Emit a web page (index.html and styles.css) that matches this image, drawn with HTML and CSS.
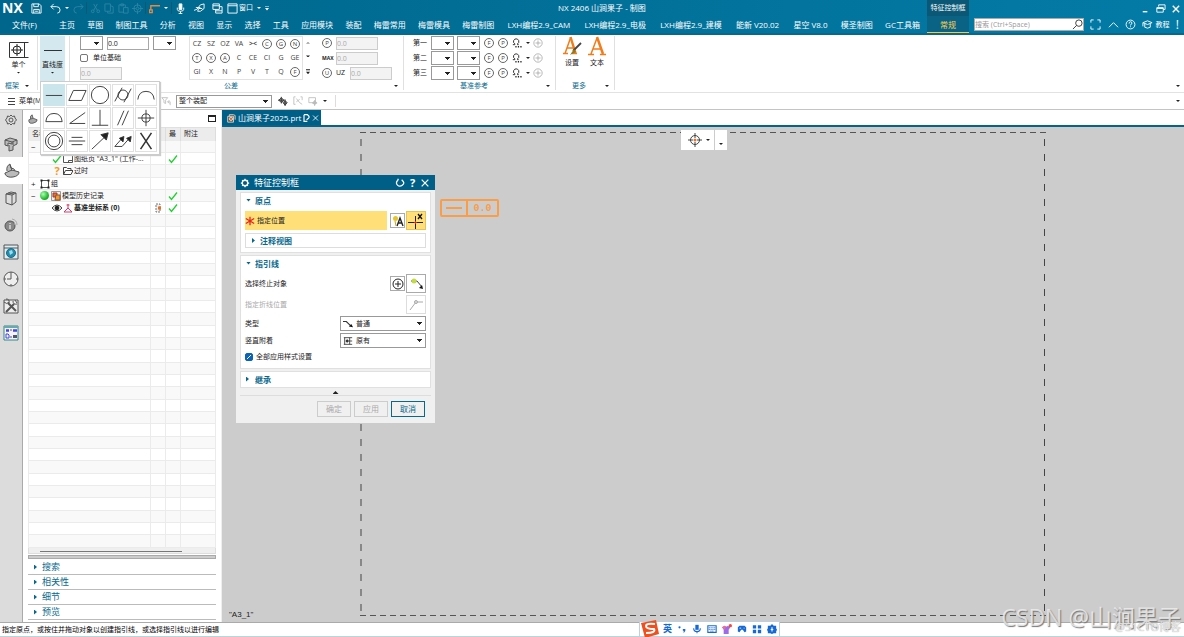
FILE: index.html
```html
<!DOCTYPE html>
<html lang="zh-CN">
<head>
<meta charset="utf-8">
<title>NX 2406 山涧果子 - 制图</title>
<link rel="stylesheet" href="styles.css">
</head>
<body>
<svg class="defs" aria-hidden="true">
  <symbol id="check" viewBox="0 0 10 10"><path d="M1 5.5 3.5 8.5 9 1.5" fill="none" stroke="#1fd12f" stroke-width="1.3"/></symbol>
  <symbol id="omega" viewBox="0 0 12 12"><path d="M1 8h2.400V7Q1 5.500 2 3 3 1 5 1t3 2Q9 5.500 6.600 7V8H8" fill="none" stroke="#333" stroke-width="1.200"/><path d="M4 10.500h1.500M7 10.500h1.500M10 10.500h1.500" stroke="#222" stroke-width="1.600"/></symbol>
  <symbol id="plus" viewBox="0 0 12 12"><circle cx="6" cy="6" r="5" fill="none" stroke="currentColor"/><path d="M6 3v6M3 6h6" stroke="currentColor"/></symbol>
  <symbol id="tree-page" viewBox="0 0 10 10"><path d="M.5 1.500h9v7h-9zM5.500 6.500h4M5.500 8.500v-2" fill="#fff" stroke="#555"/></symbol>
</svg>

<header class="top">
  <div class="titlebar">
    <div class="quick">
      <b class="logo">NX</b>
      <button aria-label="保存"><svg viewBox="0 0 12 12"><path d="M1 1h8l2 2v8H1zM3 1v3h5V1M3 11V7h6v4M4.500 9h3"/></svg></button>
      <button class="undo" aria-label="撤销"><svg viewBox="0 0 12 12"><path d="M4 1 1 4l3 3M1 4h6q4 0 4 3.500T8 11"/></svg></button>
      <i class="caret"></i>
      <button class="off" aria-label="重做"><svg viewBox="0 0 12 12"><path d="m8 1 3 3-3 3m3-3H5Q1 4 1 7.500T4 11"/></svg></button>
      <i class="bar"></i>
      <button class="off" aria-label="剪切"><svg viewBox="0 0 12 12"><path d="m4 1 4 7M8 1 4 8"/><circle cx="3" cy="9" r="1.500"/><circle cx="9" cy="9" r="1.500"/></svg></button>
      <button class="off" aria-label="复制"><svg viewBox="0 0 12 12"><path d="M1 1h6v8H1zM4 9v2h6V4L7 3"/></svg></button>
      <button class="off" aria-label="粘贴"><svg viewBox="0 0 12 12"><path d="M6 10H1V2h7v3M3 1h3v2H3zM6 5h5v6H6z"/></svg></button>
      <button class="off" aria-label="定位"><svg viewBox="0 0 12 12"><circle cx="6" cy="6" r="4"/><circle cx="6" cy="6" r="1.500"/><path d="M6 0v4M6 8v4M0 6h4M8 6h4"/></svg></button>
      <i class="bar"></i>
      <button class="hot" aria-label="引线"><svg viewBox="0 0 12 12"><path d="M2 8V3h10M.5 7.500h3v3h-3z" stroke-width="1.500"/></svg></button>
      <i class="caret"></i>
      <i class="bar"></i>
      <button aria-label="语音"><svg viewBox="0 0 12 12"><path d="M4.500 1h3v6h-3z" fill="#fff"/><path d="M2.500 5v2q0 2 3.500 2t3.500-2V5M6 9v2.500M4 11.500h4"/></svg></button>
      <button class="touch" aria-label="触控"><svg viewBox="0 0 12 12"><path d="m0 8 3-1 4-5 4-1v5L7 9H4l1-3h4"/><path d="M2 5h5"/></svg></button>
      <button class="wide" aria-label="切换窗口"><svg viewBox="0 0 12 12"><path d="M1 1h7v6H1zM1 3h7M4 7v4h7V4H8M4 8.500h7"/></svg></button>
      <button class="window"><svg viewBox="0 0 12 12"><path d="M1 1h10v10H1zM1 3h10"/></svg>窗口</button>
      <i class="caret"></i>
      <i class="caret more"></i>
    </div>
    <div class="title">NX 2406 山涧果子 - 制图</div>
    <div class="context">特征控制框</div>
    <div class="winctl">
      <button aria-label="最小化"><svg viewBox="0 0 12 12"><path d="M3 9.500h5" stroke-width="1.500"/></svg></button>
      <button aria-label="还原"><svg viewBox="0 0 12 12"><path d="M4 4V2h7v5H9M2 5h7v5H2zM2 6h7"/></svg></button>
      <button aria-label="关闭"><svg viewBox="0 0 12 12"><path d="m3 3 7 7m0-7-7 7" stroke-width="1.500"/></svg></button>
    </div>
  </div>
  <nav class="menu">
    <a class="file" href="#">文件(F)</a>
    <div class="menus">
      <a href="#">主页</a><a href="#">草图</a><a href="#">制图工具</a><a href="#">分析</a><a href="#">视图</a><a href="#">显示</a><a href="#">选择</a><a href="#">工具</a><a href="#">应用模块</a><a href="#">装配</a><a href="#">梅雷常用</a><a href="#">梅雷模具</a><a href="#">梅雷制图</a><a class="ext" href="#">LXH编程2.9_CAM</a><a class="ext" href="#">LXH编程2.9_电极</a><a class="ext" href="#">LXH编程2.9_建模</a><a class="ext" href="#">能新 V20.02</a><a class="ext" href="#">星空 V8.0</a><a href="#">模圣制图</a><a href="#">GC工具箱</a>
    </div>
    <a class="active" href="#">常规</a>
    <div class="tools">
      <label class="search"><input type="text" placeholder="搜索 (Ctrl+Space)" aria-label="搜索"><svg viewBox="0 0 12 12"><circle cx="7.500" cy="4.500" r="3.500"/><path d="M5 7 1 11"/></svg></label>
      <button aria-label="全屏"><svg viewBox="0 0 12 12"><path d="M1 4V1h3M8 1h3v3M11 8v3H8M4 11H1V8"/></svg></button>
      <button aria-label="收起"><svg viewBox="0 0 12 12"><path d="m1 9 5-5 5 5"/></svg></button>
      <button aria-label="帮助"><svg viewBox="0 0 12 12"><circle cx="6" cy="6" r="4.800"/><path d="M4.500 5q0-2 1.500-2t1.500 1.500T6 6.300V7M6 8v1"/></svg></button>
      <button class="learn"><svg viewBox="0 0 12 12"><path d="m1 4 5-2 5 2-5 2zM3 5v4l3 1 3-1V5M1 4v4"/></svg>教程</button>
      <i class="mark">!</i>
    </div>
  </nav>
</header>

<section class="ribbon">
  <div class="group frame">
    <button class="big"><svg class="ico-l" viewBox="0 0 20 16"><path d="M.5.500h19M.5 15.500h19M.5.500v15M15.500.500v15" fill="none" stroke="#333"/><circle cx="8" cy="8" r="4" fill="none" stroke="#222"/><path d="M8 2v12M2 8h12" stroke="#222"/></svg>单个<i class="caret"></i></button>
    <div class="label">框架<i class="caret"></i></div>
  </div>
  <div class="group straight">
    <button class="big on"><svg class="ico-l" viewBox="0 0 20 16"><path d="M1 8.500h18" stroke="#333"/></svg>直线度<i class="caret"></i></button>
    <div class="label">特</div>
    <div class="popup">
      <button class="on" aria-label="直线度"><svg viewBox="0 0 22 22"><path d="M2 11.500h18"/></svg></button>
      <button aria-label="平面度"><svg viewBox="0 0 22 22"><path d="M7 6h14l-5 11H2z"/></svg></button>
      <button aria-label="圆度"><svg viewBox="0 0 22 22"><circle cx="11" cy="11" r="9.500"/></svg></button>
      <button aria-label="圆柱度"><svg viewBox="0 0 22 22"><circle cx="11" cy="11" r="5.500"/><path d="M2 18 10 3M12 19l8-15"/></svg></button>
      <button aria-label="线轮廓度"><svg viewBox="0 0 22 22"><path d="M2 16q1-9 9-9t9 9"/></svg></button>
      <button aria-label="面轮廓度"><svg viewBox="0 0 22 22"><path d="M2 15q1-9 9-9t9 9z"/></svg></button>
      <button aria-label="倾斜度"><svg viewBox="0 0 22 22"><path d="M20 5 3 17h17"/></svg></button>
      <button aria-label="垂直度"><svg viewBox="0 0 22 22"><path d="M11 2v17M2 19h18"/></svg></button>
      <button aria-label="平行度"><svg viewBox="0 0 22 22"><path d="m5 19 7-16M10 19l7-16"/></svg></button>
      <button aria-label="位置度"><svg viewBox="0 0 22 22"><circle cx="11" cy="11" r="4.500"/><path d="M11 2v18M2 11h18"/></svg></button>
      <button aria-label="同轴度"><svg viewBox="0 0 22 22"><circle cx="11" cy="11" r="9.500"/><circle cx="11" cy="11" r="6.500"/></svg></button>
      <button aria-label="对称度"><svg viewBox="0 0 22 22"><path d="M5 7h12M2 11h18M5 15h12"/></svg></button>
      <button aria-label="圆跳动"><svg viewBox="0 0 22 22"><path d="M2 20 19 4"/><path d="m20 2-2 8-6-6z" fill="#222"/></svg></button>
      <button aria-label="全跳动"><svg viewBox="0 0 22 22"><path d="m2 17 8-9M10 17l8-9M2 17h8"/><path d="m12 6-1 6-4-4zM20 6l-1 6-4-4z" fill="#222"/></svg></button>
      <button aria-label="无"><svg viewBox="0 0 22 22"><path d="m5 2 12 18M17 2 5 20" stroke-width="1.700"/></svg></button>
    </div>
  </div>
  <div class="group tolerance">
    <div class="content">
      <div class="zone">
        <div class="line"><select class="sm" aria-label="前缀"><option></option></select><input class="num" value="0.0" aria-label="公差值"><select class="sm" aria-label="后缀"><option></option></select></div>
        <label class="line"><input type="checkbox" class="tick">单位基础</label>
        <div class="line"><input class="num" value="0.0" disabled aria-label="单位值"></div>
      </div>
      <div class="symbols">
        <button>CZ</button><button>SZ</button><button>OZ</button><button>VA</button><button><b>&gt;&lt;</b></button><button><span class="ring">C</span></button><button><span class="ring">G</span></button><button><span class="ring">N</span></button>
        <button><span class="ring">T</span></button><button><span class="ring">X</span></button><button><span class="ring">A</span></button><button>C</button><button>CE</button><button>CI</button><button>G</button><button>GE</button>
        <button>GI</button><button>X</button><button>N</button><button>P</button><button>V</button><button>T</button><button>Q</button><button><span class="ring">F</span></button>
      </div>
      <div class="scroll"><i class="caret up"></i><i class="caret"></i><i class="caret more"></i></div>
      <div class="mods">
        <div class="line"><span class="ring">P</span><input class="num" value="0.0" disabled aria-label="投影"></div>
        <div class="line"><b class="max">MAX</b><input class="num" value="0.0" disabled aria-label="最大值"></div>
        <div class="line"><span class="ring">U</span><span class="uz">UZ</span><input class="num" value="0.0" disabled aria-label="非对称"></div>
      </div>
    </div>
    <div class="label">公差<i class="caret"></i></div>
  </div>
  <div class="group datum">
    <div class="rows">
      <div class="line"><span class="nth">第一</span><select class="sm" aria-label="第一基准"><option></option></select><select class="sm" aria-label="第一修饰"><option></option></select><span class="ring">F</span><span class="ring">P</span><svg class="ico"><use href="#omega"/></svg><i class="caret"></i><svg class="ico dim"><use href="#plus"/></svg></div>
      <div class="line"><span class="nth">第二</span><select class="sm" aria-label="第二基准"><option></option></select><select class="sm" aria-label="第二修饰"><option></option></select><span class="ring">F</span><span class="ring">P</span><svg class="ico"><use href="#omega"/></svg><i class="caret"></i><svg class="ico dim"><use href="#plus"/></svg></div>
      <div class="line"><span class="nth">第三</span><select class="sm" aria-label="第三基准"><option></option></select><select class="sm" aria-label="第三修饰"><option></option></select><span class="ring">F</span><span class="ring">P</span><svg class="ico"><use href="#omega"/></svg><i class="caret"></i><svg class="ico dim"><use href="#plus"/></svg></div>
    </div>
    <div class="label">基准参考<i class="caret"></i></div>
  </div>
  <div class="group extra">
    <div class="pair">
      <button class="big"><svg class="ico-xl" viewBox="0 0 20 20"><path d="M1 17.500h5M10 17.500h5M3 17.500 8.500 2M5 12h7" fill="none" stroke="#f07c1a" stroke-width="1.500"/><path d="m8.500 1 5 16" stroke="#f07c1a" stroke-width="2.500"/><path d="m19 7-8 8" stroke="#444" stroke-width="1.800"/><path d="m12 13-4 6 6-3z" fill="#8a7d22"/></svg>设置</button>
      <button class="big"><svg class="ico-xl" viewBox="0 0 20 20"><path d="M1 18.500h6M13 18.500h6M4 18 10 2M6 13h8" fill="none" stroke="#f07c1a" stroke-width="1.500"/><path d="m10 1 6 17" stroke="#f07c1a" stroke-width="2.500"/></svg>文本</button>
    </div>
    <div class="label">更多<i class="caret"></i></div>
  </div>
  <div class="tail"><i class="caret"></i></div>
</section>

<section class="selection">
  <button class="menu-btn"><svg viewBox="0 0 8 8"><path d="M0 1.500h7M0 4.500h7M0 7.500h7" stroke="#444"/></svg>菜单(M)</button>
  <svg class="ico faint" viewBox="0 0 12 12"><path d="M1 2h7L5.500 5v4l-2-1V5zM8 7h3v4M10 5 8 7l2 2" fill="none" stroke="currentColor"/></svg>
  <select class="scope" aria-label="范围"><option>整个装配</option></select>
  <svg class="ico" viewBox="0 0 12 12"><path d="m1 5 3-3 3 3-3 3z" fill="#999" stroke="#333"/><path d="m6 8 2.500-2.500L11 8l-2.500 3zM0 5h8M4 1v8M8.500 4v8" fill="#777" stroke="#333"/></svg>
  <svg class="ico faint" viewBox="0 0 12 12"><path d="M3 1H1v9h2M9 1h2v4M4 3l4 5M8 4l-4 3M8 8l3 2" fill="none" stroke="currentColor"/></svg>
  <svg class="ico faint" viewBox="0 0 12 12"><path d="M1 2h8v6H1zM8 5v7M5 8.500h6" fill="none" stroke="currentColor"/><path d="m8 5 3 3-3 3-3-3z" fill="currentColor"/></svg>
  <i class="caret"></i><i class="bar"></i>
  <div class="tail"><i class="caret"></i></div>
</section>

<main class="work">
  <nav class="strip">
    <button aria-label="设置"><svg viewBox="0 0 16 16"><circle cx="8" cy="8" r="2"/><path d="m8 3 1.500 1.500 2-.5.500 2L13.500 8 12 9.500l-.5 2.500-2-.500L8 13l-1.500-1.500-2 .500L4 10 2.500 8 4 6l.5-2 2 .500z"/></svg></button>
    <button aria-label="装配"><svg viewBox="0 0 16 16"><path d="m2 4 5-2 7 2-5 2zM2 4v5l3 1V7l4 1V6M14 4v4l-4 2v4l-4 1V9M10 6v3" fill="#bbb"/></svg></button>
    <button class="on" aria-label="部件导航器"><svg viewBox="0 0 16 16"><path d="m1 10 7-3 7 2q0 4-6 5T1 11zM3 8q-1-5 3-7l2 7M6 2l1 3 3 1 1 2" fill="#bbb"/></svg></button>
    <button aria-label="重用库"><svg viewBox="0 0 16 16"><path d="M3 4v9l6 2V5zM3 4l5-2 5 1v9l-4 3M9 5l4-2M5 3l6 1" fill="#ddd"/></svg></button>
    <button aria-label="信息"><svg viewBox="0 0 16 16"><circle cx="7" cy="9" r="5" fill="#888"/><path d="M7 6v1M7 8v4" stroke="#fff"/><path d="M9 2q5 1 5 6M10 4q2 1 2 4" stroke="#aaa"/></svg></button>
    <button aria-label="浏览器"><svg viewBox="0 0 16 16"><path d="M1 1h14v14H1zM1 4h14" fill="#ddeef3"/><circle cx="8" cy="9" r="4.500" fill="#238cab" stroke="#1c6985"/><path d="m6 7 3-1 1 3-3 2z" fill="#9de" stroke="none"/></svg></button>
    <button aria-label="历史"><svg viewBox="0 0 16 16"><circle cx="8" cy="8" r="7" fill="#eee"/><path d="M8 3v5H4M8 1v2M15 8h-2M8 15v-2M1 8h2"/></svg></button>
    <button aria-label="加工"><svg viewBox="0 0 16 16"><path d="M1 2h14v13H1z" fill="#eee"/><path d="m5 5 8 8M11 6l-8 8" stroke-width="2"/><path d="M1 4q3 3 5 0M3 1q4 0 3 4M10 3q0 4 4 3M12 2l2 3"/></svg></button>
    <button aria-label="模板"><svg viewBox="0 0 16 16"><path d="M1 1h14v14H1z" fill="#f3f3ff" stroke="#388"/><path d="M1 2h14" stroke="#6aa" stroke-width="2"/><path d="M3 5.500h3M10 5.500h4" stroke="#4343e0" stroke-width="2.500"/><path d="M3 9h2l1 1v3H3z" stroke="#4343e0"/><path d="M10 11.500h4" stroke="#556" stroke-width="3"/><path d="M7 5h2M7 12h2"/></svg></button>
  </nav>

  <aside class="navigator">
    <div class="nav-head"><svg class="ico" viewBox="0 0 12 12"><path d="m1 7 5-2 5 2q0 3-5 4T1 8zM3 6q-1-4 2-5l1 4" fill="#aaa" stroke="#555"/></svg><span class="red">图</span><button class="pin" aria-label="最大化"></button></div>
    <table class="tree">
      <thead><tr><th>名称</th><th>当</th><th>最</th><th>附注</th></tr></thead>
      <tbody>
        <tr><td><div class="node"><i class="exp">−</i><svg class="ico"><use href="#tree-page"/></svg>图纸</div></td><td></td><td></td><td></td></tr>
        <tr><td><div class="node sub"><svg class="ico"><use href="#check"/></svg><svg class="ico"><use href="#tree-page"/></svg>图纸页 "A3_1" (工作-...</div></td><td></td><td><svg class="ico"><use href="#check"/></svg></td><td></td></tr>
        <tr><td><div class="node sub"><i class="ask">?</i><svg class="ico" viewBox="0 0 10 10"><path d="M.5 8.500v-7h3l1 1H8v2M.5 8.500l2-4H10l-2 4z" fill="#fff" stroke="#444"/></svg>过时</div></td><td></td><td></td><td></td></tr>
        <tr><td><div class="node"><i class="exp">+</i><svg class="ico" viewBox="0 0 10 10"><path d="M1.500 1.500h7v7h-7z" fill="none" stroke="#555"/><path d="M.5 1.500h2M7.500 1.500h2M.5 8.500h2M7.500 8.500h2" stroke="#222" stroke-width="2"/></svg>组</div></td><td></td><td></td><td></td></tr>
        <tr><td><div class="node"><i class="exp">−</i><i class="ball"></i><svg class="ico" viewBox="0 0 10 10"><path d="M.5.500h9v9h-9z" fill="#eee" stroke="#999"/><path d="M2 2h4v4H2z" fill="#e4712a" stroke="#a33"/><path d="M5 4h4v5H4z" fill="#f19a32" stroke="#853"/></svg>模型历史记录</div></td><td></td><td><svg class="ico"><use href="#check"/></svg></td><td></td></tr>
        <tr><td><div class="node sub"><svg class="ico" viewBox="0 0 10 10"><path d="M0 5q5-6 10 0-5 6-10 0z" fill="#eee" stroke="#444"/><circle cx="5" cy="5" r="2.300" fill="#222"/></svg><svg class="ico" viewBox="0 0 10 10"><path d="M5 5V1M5 5 1 9M5 5l4 4M1 9h8M3.500 2h3" fill="none" stroke="#d53a68"/></svg><b>基准坐标系 (0)</b></div></td><td><svg class="ico" viewBox="0 0 10 10"><path d="M3 1h4v8H3z" fill="#eee" stroke="#777" stroke-dasharray="2 1"/><path d="M5 5h3" stroke="#e5702a" stroke-width="3"/></svg></td><td><svg class="ico"><use href="#check"/></svg></td><td></td></tr>
        <tr><td></td><td></td><td></td><td></td></tr><tr><td></td><td></td><td></td><td></td></tr><tr><td></td><td></td><td></td><td></td></tr>
        <tr><td></td><td></td><td></td><td></td></tr><tr><td></td><td></td><td></td><td></td></tr><tr><td></td><td></td><td></td><td></td></tr>
        <tr><td></td><td></td><td></td><td></td></tr><tr><td></td><td></td><td></td><td></td></tr><tr><td></td><td></td><td></td><td></td></tr>
        <tr><td></td><td></td><td></td><td></td></tr><tr><td></td><td></td><td></td><td></td></tr><tr><td></td><td></td><td></td><td></td></tr>
        <tr><td></td><td></td><td></td><td></td></tr><tr><td></td><td></td><td></td><td></td></tr><tr><td></td><td></td><td></td><td></td></tr>
        <tr><td></td><td></td><td></td><td></td></tr><tr><td></td><td></td><td></td><td></td></tr><tr><td></td><td></td><td></td><td></td></tr>
        <tr><td></td><td></td><td></td><td></td></tr><tr><td></td><td></td><td></td><td></td></tr><tr><td></td><td></td><td></td><td></td></tr>
        <tr><td></td><td></td><td></td><td></td></tr><tr><td></td><td></td><td></td><td></td></tr><tr><td></td><td></td><td></td><td></td></tr>
        <tr><td></td><td></td><td></td><td></td></tr><tr><td></td><td></td><td></td><td></td></tr><tr><td></td><td></td><td></td><td></td></tr>
      </tbody>
    </table>
    <div class="hscroll"><i></i></div>
    <div class="splitter"></div>
    <button class="fold"><i class="caret right"></i>搜索</button>
    <button class="fold"><i class="caret right"></i>相关性</button>
    <button class="fold"><i class="caret right"></i>细节</button>
    <button class="fold"><i class="caret right"></i>预览</button>
  </aside>

  <section class="stage">
    <div class="tabs"><div class="tab"><svg class="ico" viewBox="0 0 12 12"><path d="M2 4h7v7H2zM4 4V2h5l2 1v5" fill="#554" stroke="#ddd"/><circle cx="6" cy="7" r="2" fill="#d86a3a" stroke="#eee"/></svg>山涧果子2025.prt<svg class="ico slim" viewBox="0 0 8 12"><path d="M1 2h4l2 2v2M5 10H1V2M4 8l3-2" fill="none" stroke="#fff" stroke-width="1.400"/></svg><button aria-label="关闭标签"><svg class="ico slim" viewBox="0 0 8 12"><path d="m1 3 6 6m0-6L1 9" stroke="#fff"/></svg></button></div></div>
    <div class="canvas">
      <svg class="sheet" width="686" height="486"><path d="M0 1.500h686M0 484.500h686" stroke="#555" stroke-dasharray="6 4"/><path d="M1 0v486M684.500 0v486" stroke="#444" stroke-dasharray="7 8" stroke-dashoffset="-8"/></svg>
      <div class="float">
        <svg class="ico-m" viewBox="0 0 14 14"><circle cx="7" cy="7" r="4.500" fill="none" stroke="#444"/><circle cx="7" cy="7" r="1.500" fill="#e8742c"/><path d="M7 0v5M7 9v5M0 7h5M9 7h5" stroke="#444"/></svg><i class="caret"></i><span class="drop"><i class="caret"></i></span>
      </div>
      <div class="fcf"><i></i><b>0.0</b></div>
      <span class="name">"A3_1"</span>

      <form class="dialog">
        <div class="dlg-head"><svg class="ico" viewBox="0 0 12 12"><circle cx="6" cy="6" r="3.300" fill="none" stroke="#fff" stroke-width="1.600"/><path d="M6 1v2M6 9v2M1 6h2M9 6h2M2.500 2.500l1 1M8.500 8.500l1 1M9.500 2.500l-1 1M3.500 8.500l-1 1" stroke="#fff" stroke-width="1.500"/></svg><span>特征控制框</span>
          <button type="button" aria-label="重置"><svg class="ico" viewBox="0 0 12 12"><path d="M3 3q-2.500 3 0 5.500t6 0T8 2M4 1 3 3.500" fill="none" stroke="#fff" stroke-width="1.500"/></svg></button><button type="button" class="help">?</button><button type="button" aria-label="关闭"><svg class="ico" viewBox="0 0 12 12"><path d="m2 2 8 8m0-8-8 8" stroke="#fff" stroke-width="1.500"/></svg></button></div>
        <div class="card">
          <h2><i class="caret"></i>原点</h2>
          <div class="field"><div class="need"><svg class="ico" viewBox="0 0 12 12"><path d="m1 3 10 6M11 3 1 9M6 1v10" stroke="#e8251c" stroke-width="1.600"/></svg>指定位置</div>
            <button type="button" class="tool" aria-label="原点工具"><svg viewBox="0 0 12 12"><path d="M5 11 8 3l3 8M6 8h4" fill="none" stroke="#222" stroke-width="1.400"/><circle cx="3.500" cy="3.500" r="2.500" fill="#e6c42e"/><path d="m3 6 1 5" stroke="#c9a52a"/></svg></button>
            <button type="button" class="tool lg gold" aria-label="点"><svg viewBox="0 0 16 16"><path d="M7.500 3v13M0 9.500h15" stroke="#222"/><path d="M7.500 8v3M6 9.500h3" stroke="#e22"/><path d="m10 1 4 5m0-5-4 5" stroke="#111" stroke-width="1.300"/></svg></button></div>
          <button type="button" class="nested"><i class="caret right"></i>注释视图</button>
        </div>
        <div class="card">
          <h2><i class="caret"></i>指引线</h2>
          <div class="field"><span>选择终止对象</span><button type="button" class="tool" aria-label="选择对象"><svg viewBox="0 0 12 12"><use href="#plus"/></svg></button><button type="button" class="tool lg" aria-label="引线"><svg viewBox="0 0 16 16"><path d="M3 5h6l5 6" fill="none" stroke="#444"/><circle cx="6" cy="5" r="2.500" fill="#c5db45"/><path d="m15 13-4-1 3-3z" fill="#111"/></svg></button></div>
          <div class="field muted"><span>指定折线位置</span><button type="button" class="tool lg" disabled aria-label="折线"><svg viewBox="0 0 16 16"><path d="m2 13 6-8h7" fill="none" stroke="#aaa"/><circle cx="8" cy="5" r="1.500" fill="#ddd" stroke="#aaa"/></svg></button></div>
          <div class="field"><label for="kind">类型</label><div class="pick"><select id="kind"><option>普通</option></select><svg class="ico" viewBox="0 0 12 12"><path d="M0 3h4l5 5" fill="none" stroke="#333" stroke-width="1.300"/><path d="m12 10-5-1 3-3z" fill="#111"/></svg></div></div>
          <div class="field"><label for="attach">竖直附着</label><div class="pick"><select id="attach"><option>原有</option></select><svg class="ico" viewBox="0 0 12 12"><path d="M1 2h10M1 10h10M2 2v8M8 2v8M3 6h8M5 4v4" fill="none" stroke="#333"/><circle cx="5" cy="6" r="1.500" fill="#333"/></svg></div></div>
          <label class="all"><input type="checkbox" class="tick" checked>全部应用样式设置</label>
        </div>
        <div class="card closed"><h2><i class="caret right"></i>继承</h2></div>
        <div class="less"><i class="caret up"></i></div>
        <div class="actions"><button type="button" disabled>确定</button><button type="button" disabled>应用</button><button type="button" class="primary">取消</button></div>
      </form>
    </div>
  </section>
</main>

<footer class="status">指定原点，或按住并拖动对象以创建指引线，或选择指引线以进行编辑</footer>

<div class="ime">
  <svg class="sogou" viewBox="0 0 20 20"><path d="m1 4 15-3 3 14-14 4z" fill="#f0501e"/><path d="M15 5Q6 4 6 7t8 3q2 4-8 4" fill="none" stroke="#fff" stroke-width="2"/></svg>
  <b>英</b>
  <svg viewBox="0 0 12 12"><circle cx="3" cy="4" r="1.300"/><path d="M7 6h3v2L8 11V8H7z"/></svg>
  <svg viewBox="0 0 12 12"><path d="M4 1h4v6H4z"/><path d="M2 5q0 4 4 4t4-4M6 9v2" fill="none" stroke="#1469d6" stroke-width="1.300"/></svg>
  <svg viewBox="0 0 12 12"><path d="M1 2h10v8H1z" fill="none" stroke="#1469d6" stroke-width="1.300"/><path d="M2 4.500h8M2 6.500h8M4 8.500h4" stroke="#1469d6" stroke-dasharray="1.500 .7"/></svg>
  <svg viewBox="0 0 12 12"><path d="m0 4 3-2q2 2 4 0l3 2-2 3v5H2V7z" fill="#9b6be8"/><path d="m0 4 3-2 2 1-2 4z" fill="#f06f8c"/><circle cx="10" cy="2" r="2" fill="#f4483a"/></svg>
  <svg viewBox="0 0 12 12"><path d="M1 9V4l2-2h6l2 2v5l-2 1-2-3H5l-2 3z"/><path d="M3 5h2M8 5h1" stroke="#fff"/></svg>
  <svg viewBox="0 0 12 12"><path d="M1 1.500h4v4H1zM7 1.500h4v4H7zM1 7h4v4H1zM7 7h4v4H7z"/></svg>
  <svg viewBox="0 0 12 12"><path d="m6 0 2 2 3 0v3l1 2-1 2v2H8l-2 1-2-1H1V9L0 7l1-2V2h3z"/><path d="M6 4v5M4.500 6.500h3" stroke="#fff" stroke-width="1.300"/></svg>
</div>
<div class="watermark"><span>CSDN @山涧果子</span><small>@51CTO博客</small></div>
</body>
</html>
```

FILE: styles.css
```css
* { box-sizing: border-box; margin: 0; }
body {
  display: flex;
  flex-direction: column;
  height: 100vh;
  overflow: hidden;
  background: #fff;
  color: #222;
  font: 7px/10px "Open Sans", "Noto Sans CJK SC", sans-serif;
}
button, input, select { font: inherit; color: inherit; padding: 0; border: 0; background: none; border-radius: 0; }
button { display: flex; align-items: center; justify-content: center; white-space: nowrap; }
a { color: inherit; text-decoration: none; }
i { font-style: normal; }
svg { display: block; flex: none; }
.defs { position: absolute; width: 0; height: 0; }

.caret { flex: none; width: 4px; height: 2px; background: currentColor; clip-path: polygon(0 0, 100% 0, 50% 100%); }
.caret.up { clip-path: polygon(0 100%, 100% 100%, 50% 0); }
.caret.right { width: 3px; height: 5px; clip-path: polygon(0 0, 100% 50%, 0 100%); }
.caret.more { height: 5px; clip-path: polygon(0 0, 100% 0, 100% 20%, 0 20%, 0 50%, 100% 50%, 50% 100%, 0 50%); }
.bar { flex: none; width: 1px; height: 12px; background: #0b5877; }
.ico { width: 10px; height: 10px; }
.ico.slim { width: 7px; }
.ico-m { width: 14px; height: 14px; }
.ico-l { width: 20px; height: 16px; }
.ico-xl { width: 20px; height: 20px; }

/* title bar and menu */
.top { flex: none; color: #fff; background: linear-gradient(90deg, #00668b, #037ba6); border-bottom: 2px solid #07688d; }
.top svg { width: 11px; height: 11px; fill: none; stroke: currentColor; }
.titlebar { display: flex; height: 16px; font-size: 8px; }
.quick { display: flex; align-items: center; gap: 4px; width: 558px; padding-left: 2px; }
.quick .bar { margin: 0 -1px; }
.logo { width: 25px; font-size: 14px; line-height: 16px; }
.undo { margin-left: 4px; }
.quick .off { color: #2b86a5; margin-right: -1px; }
.quick .hot { color: #e58a45; }
.quick .wide { margin-left: 3px; }
.quick .touch { margin-left: 4px; }
.window { gap: 1px; font-size: 7px; }
.title { flex: 1; line-height: 15px; }
.context { width: 42px; background: #0a5875; font-size: 7px; line-height: 16px; text-align: center; }
.winctl { display: flex; justify-content: flex-end; align-items: center; gap: 4px; width: 215px; padding-right: 3px; }
.menu { display: flex; height: 17px; font-size: 8px; line-height: 17px; }
.file { width: 59px; padding-left: 12px; }
.menus { display: flex; flex: 1; justify-content: space-between; padding-right: 7px; white-space: nowrap; }
.menus .ext { padding: 0 1px; }
.menu .active { width: 42px; color: #ffd24d; background: #0a6384; border-bottom: 1px solid #ffc93c; text-align: center; }
.tools { display: flex; align-items: center; justify-content: space-between; width: 215px; padding: 0 5px; }
.search { display: flex; align-items: center; width: 110px; height: 13px; background: #fff; border: 1px solid #aaa; color: #333; }
.search input { flex: 1; min-width: 0; font-size: 7px; }
.search input::placeholder { color: #999; }
.learn { gap: 2px; font-size: 7px; }
.mark { font-size: 12px; }

/* ribbon */
.ribbon { display: flex; flex: none; height: 58px; padding: 1px 0 2px; border-bottom: 1px solid #e2e2e2; }
.group { display: flex; flex-direction: column; justify-content: space-between; border-right: 1px solid #e0e0e0; }
.frame { width: 38px; }
.straight { position: relative; width: 32px; }
.tolerance { width: 334px; }
.datum { width: 152px; }
.extra { width: 59px; }
.big { flex-direction: column; gap: 2px; height: 45px; padding-bottom: 2px; }
.big.on { width: 25px; margin-left: 2px; background: #d3e9ef; }
.label { display: grid; grid-template-columns: var(--lead) auto 1fr; align-items: center; height: 9px; color: #08688c; }
.label::before { content: ""; }
.label .caret { color: #222; justify-self: end; margin-right: 5px; }
.frame { --lead: 5px; }
.frame .label .caret { margin-right: 8px; }
.straight { --lead: 2px; }
.tolerance { --lead: 154px; }
.datum { --lead: 56px; }
.extra { --lead: 16px; }
.content { display: flex; padding-left: 10px; }
.line { display: flex; align-items: center; gap: 4px; height: 14px; }
.zone, .mods, .rows { display: flex; flex-direction: column; gap: 1px; }
.zone { width: 98px; margin-right: 11px; }
.num { width: 42px; height: 13px; border: 1px solid #a8a8a8; }
.num:disabled { background: #f3f3f3; border-color: #ccc; color: #aaa; }
select {
  appearance: none;
  height: 14px;
  padding-left: 2px;
  border: 1px solid #999;
  background: conic-gradient(from 315deg at 50% 100%, #222 90deg, transparent 0) calc(100% - 3px) 50% / 5px 3px no-repeat #fff;
}
.sm { width: 23px; }
.tick { appearance: none; width: 8px; height: 8px; border: 1px solid #777; border-radius: 2px; margin-right: 1px; }
.tick:checked { background: linear-gradient(135deg, transparent 45%, #fff 45%, #fff 55%, transparent 55%) center / 4px 4px no-repeat #0b63b8; border-color: #0b63b8; }
.symbols { display: grid; grid-template-columns: repeat(8, 1fr); grid-auto-rows: 14px; width: 114px; border: 1px solid #e2e2e2; color: #444; }
.ring { display: flex; align-items: center; justify-content: center; width: 10px; height: 10px; border: 1px solid #666; border-radius: 50%; color: #444; font-size: 6px; line-height: 8px; }
.scroll { display: flex; flex-direction: column; justify-content: space-around; align-items: center; width: 10px; }
.scroll .up { color: #999; }
.mods { margin-left: 9px; }
.max { width: 10px; font-size: 5px; }
.uz { width: 10px; }
.rows { padding-left: 9px; }
.rows .line { gap: 3px; }
.nth { width: 15px; }
.rows .ring, .rows .ico, .rows .caret { margin-left: 1px; }
.rows .dim { margin-left: 0; }
.dim { color: #aaa; }
.pair { display: flex; justify-content: space-between; padding: 0 7px 0 6px; }
.pair .big { justify-content: flex-start; }
.tail { display: flex; flex: 1; align-items: flex-end; justify-content: flex-end; padding: 0 4px 3px 0; }
.popup { position: absolute; left: 2px; top: 45px; z-index: 5; display: grid; grid-template-columns: repeat(5, 22px); gap: 1px; padding: 2px; background: #fff; border: 1px solid #ccc; box-shadow: 1px 1px 1px #ccc; }
.popup button { height: 22px; border: 1px solid #e0e0e0; }
.popup .on { background: #cbe5ec; border-color: #cbe5ec; }
.popup svg { width: 20px; height: 20px; fill: none; stroke: #333; }

/* selection bar */
.selection { display: flex; flex: none; align-items: center; gap: 5px; height: 17px; border-bottom: 1px solid #c4c4c4; }
.menu-btn { gap: 3px; width: 156px; padding-left: 8px; justify-content: flex-start; }
.menu-btn svg { width: 8px; height: 8px; }
.faint { color: #bbb; }
.scope { width: 96px; height: 13px; margin-right: 1px; }
.selection .bar { background: #ddd; margin-left: 3px; }
.selection .tail { align-items: center; padding: 0 4px 0 0; }

/* workspace */
.work { display: flex; flex: 1; min-height: 0; }
.strip { display: flex; flex-direction: column; width: 23px; background: #dcdcdc; border-right: 1px solid #aaa; }
.strip button { height: 27px; }
.strip button:first-child { height: 20px; }
.strip .on { background: #fff; margin-right: -1px; }
.strip svg { width: 16px; height: 16px; fill: none; stroke: #555; }
.navigator { display: flex; flex-direction: column; width: 199px; padding: 0 5px 2px; border-right: 1px solid #eee; }
.nav-head { display: flex; align-items: center; height: 17px; gap: 2px; }
.red { flex: 1; color: #b22; }
.pin { width: 8px; height: 7px; border: 1px solid #222; border-top-width: 2px; }
.tree { border-collapse: collapse; table-layout: fixed; width: 100%; border: 1px solid #e0e0e0; }
.tree th { height: 13px; padding: 0 0 0 3px; background: #ececec; border: 1px solid #ddd; border-width: 0 1px 0 0; font-weight: 400; text-align: left; line-height: 10px; }
.tree th:nth-child(2), .tree th:nth-child(3) { width: 15px; }
.tree th:nth-child(4) { width: 35px; }
.tree td { height: 12px; padding: 0 0 0 2px; border: 1px solid #ebebeb; line-height: 10px; }
.tree td:first-child { padding-left: 1px; }
.tree tbody tr:nth-child(3n) td { height: 13px; }
.tree tbody tr:nth-child(odd) { background: #f9f9f9; }
.node { display: flex; align-items: center; gap: 1px; height: 10px; white-space: nowrap; }
.sub { padding-left: 22px; }
.exp { width: 9px; padding-left: 1px; font-size: 8px; }
.ask { width: 10px; color: #f39a22; font-size: 11px; font-weight: 700; text-align: center; }
.ball { width: 9px; height: 9px; margin-right: 1px; border-radius: 50%; background: radial-gradient(circle at 35% 35%, #aaffb0, #22b82e 60%, #0c7a18); }
.hscroll { flex: 1; padding: 3px 33px 0 11px; background: #efefef; border: 1px solid #ddd; border-top: 0; }
.hscroll i { display: block; height: 1px; background: #777; }
.splitter { height: 4px; margin: 1px 0; background: #ccc; border: 1px solid #aaa; }
.fold { flex: none; justify-content: flex-start; gap: 5px; height: 15px; padding-left: 6px; border-bottom: 1px solid #bbb; color: #08688c; font-size: 9px; }

.stage { display: flex; flex: 1; flex-direction: column; min-width: 0; background: #ccc; }
.tabs { display: flex; height: 17px; background: #fff; border-bottom: 2px solid #086389; }
.tab { display: flex; align-items: center; gap: 2px; padding: 0 2px 0 4px; background: #005f87; color: #fff; font-size: 8px; }
.canvas { position: relative; flex: 1; }
.sheet { position: absolute; left: 138px; top: 4px; }
.float { position: absolute; left: 459px; top: 3px; display: flex; align-items: center; gap: 4px; height: 20px; padding-left: 7px; background: #fff; }
.drop { display: flex; align-items: flex-end; align-self: stretch; padding: 0 4px 5px; border-left: 1px solid #ccc; }
.fcf { position: absolute; left: 218px; top: 72px; display: flex; align-items: center; width: 59px; height: 18px; border: 2px solid #fb9c47; border-radius: 2px; color: #fb9c47; font: 700 10px/12px "Liberation Mono", monospace; }
.fcf i { width: 16px; height: 2px; margin: 0 4px; background: #fb9c47; }
.fcf b { flex: 1; padding-top: 2px; border-left: 2px solid #fb9c47; text-align: center; }
.name { position: absolute; left: 7px; bottom: 2px; font: 8px/10px "Liberation Sans", sans-serif; }

/* dialog */
.dialog { position: absolute; left: 14px; top: 48px; width: 199px; padding-bottom: 6px; background: #f0f0f0; }
.dlg-head { display: flex; align-items: center; gap: 3px; height: 15px; padding: 0 5px 0 4px; background: #005f87; color: #fff; }
.dlg-head span { flex: 1; font-size: 9px; margin-left: 1px; }
.help { width: 9px; font-size: 11px; font-weight: 700; }
.card { display: flex; flex-direction: column; gap: 2px; margin: 2px 4px 0; padding: 1px 4px 4px; background: #fff; border: 1px solid #e0e0e0; }
.card h2 { display: flex; align-items: center; gap: 4px; height: 12px; margin-bottom: 3px; color: #08688c; font-size: 8px; line-height: 11px; }
.card.closed { padding-bottom: 2px; }
.closed h2 { margin-bottom: 0; }
.card h2 .caret { width: 5px; height: 3px; margin-left: 1px; }
.card h2 .caret.right { width: 3px; height: 5px; margin-right: 2px; }
.field { display: flex; align-items: center; gap: 1px; }
.field > span, .field > label { flex: 1; }
.need { display: flex; flex: 1; align-items: center; gap: 2px; height: 19px; margin-right: 2px; background: #ffe078; }
.tool { width: 15px; height: 15px; border: 1px solid #aaa; background: #fff; }
.tool svg { width: 12px; height: 12px; }
.tool.lg { width: 20px; height: 19px; }
.tool.lg svg { width: 16px; height: 16px; }
.tool.gold { background: #ffe078; border-color: #e6c45a; }
.muted { color: #aaa; }
.muted .tool { border-color: #ddd; }
.nested { justify-content: flex-start; gap: 5px; height: 15px; margin-top: 1px; padding-left: 6px; border: 1px solid #ddd; color: #08688c; font-size: 8px; font-weight: 700; }
.pick { display: grid; align-items: center; width: 86px; }
.pick > * { grid-area: 1 / 1; }
.pick select { height: 15px; padding-left: 15px; }
.pick svg { margin-left: 3px; }
.all { display: flex; align-items: center; gap: 2px; height: 14px; }
.less { display: flex; justify-content: center; height: 8px; padding-top: 3px; margin: 0 4px; border-bottom: 1px solid #ddd; }
.less .caret { height: 3px; width: 6px; }
.actions { display: flex; justify-content: flex-end; gap: 3px; padding: 5px 10px 0; }
.actions button { width: 34px; height: 16px; border: 1px solid #aaa; font-size: 8px; }
.actions button:disabled { color: #aaa; border-color: #ccc; }
.actions .primary { color: #08688c; border-color: #08688c; }

/* bottom */
.status { flex: none; height: 15px; padding-left: 2px; border-top: 1px solid #aaa; border-bottom: 1px solid #bcd3d9; color: #000; line-height: 13px; }
.ime { position: absolute; left: 639px; bottom: 0; display: flex; align-items: center; gap: 5px; height: 16px; padding-right: 2px; background: #fff; border: 1px solid #bcd0e4; color: #1469d6; font-size: 9px; }
.ime svg { width: 10px; height: 10px; fill: #1469d6; }
.ime .sogou { width: 20px; height: 20px; margin-right: -2px; }
.watermark { position: absolute; right: 3px; bottom: 5px; display: grid; justify-items: end; color: #f2f2f2cc; font-size: 23px; line-height: 30px; text-shadow: 1px 1px 1px #777; white-space: nowrap; }
.watermark > * { grid-area: 1 / 1; }
.watermark small { align-self: end; color: #e8e8e8; font-size: 11px; line-height: 11px; text-shadow: 0 0 1px #999; }
```
